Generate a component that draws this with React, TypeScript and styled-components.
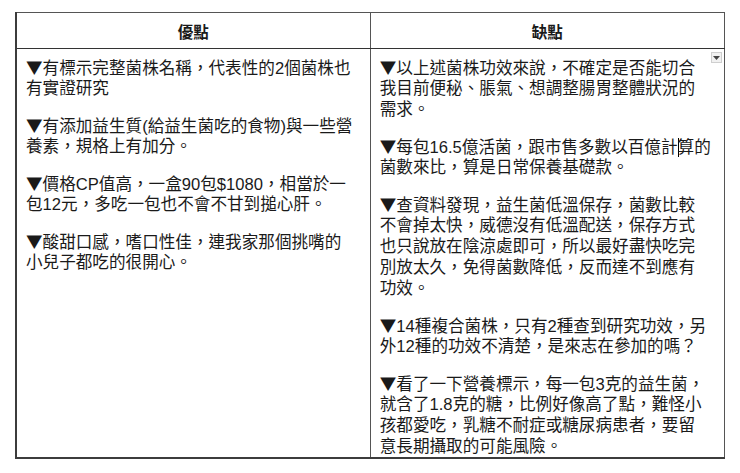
import React from "react";
import styled, { createGlobalStyle } from "styled-components";

const GlobalStyle = createGlobalStyle`
  body {
    margin: 0;
    background: #ffffff;
    color: #1a1a1a;
    font-family: "Liberation Sans", "Noto Sans CJK TC", sans-serif;
  }
`;

const Page = styled.div`
  padding: 12px 0 0 15px;
`;

const Table = styled.table`
  width: 710px;
  border-collapse: collapse;
  table-layout: fixed;
  border-top: 1px solid #6e6e6e;
  border-right: 1px solid #5a5a5a;
  border-left: 2px solid #3c3c3c;
  border-bottom: 2px solid #3c3c3c;
`;

const HeadCell = styled.th`
  height: 35px;
  padding: 0;
  border: 1px solid #555;
  border-bottom-color: #333;
  font-size: 15.5px;
  font-weight: bold;
  text-align: center;
  vertical-align: middle;
`;

const BodyCell = styled.td`
  position: relative;
  padding: 8px 2px 0 9px;
  border: 1px solid #555;
  vertical-align: top;
`;

const Para = styled.div`
  margin: 0 0 16px;
  font-size: 16.6px;

  &:last-child {
    margin-bottom: 0;
  }
`;

const Line = styled.div`
  height: 21px;
  line-height: 21px;
  white-space: nowrap;
`;

const Mark = styled.span`
  font-family: "Noto Sans CJK TC", sans-serif;
`;

const Caret = styled.span`
  display: inline-block;
  width: 1px;
  height: 19px;
  margin: 0 -1px 0 0;
  background: #000;
  vertical-align: -4px;
`;

const DropButton = styled.div`
  position: absolute;
  top: 3px;
  right: 2px;
  width: 9px;
  height: 9px;
  border: 1px solid #cfcfcf;
  background: #f1f1f1;
  display: flex;
  align-items: center;
  justify-content: center;
`;

const pros: React.ReactNode[][] = [
  ["有標示完整菌株名稱，代表性的2個菌株也", "有實證研究"],
  ["有添加益生質(給益生菌吃的食物)與一些營", "養素，規格上有加分。"],
  ["價格CP值高，一盒90包$1080，相當於一", "包12元，多吃一包也不會不甘到搥心肝。"],
  ["酸甜口感，嗜口性佳，連我家那個挑嘴的", "小兒子都吃的很開心。"],
];

const cons: React.ReactNode[][] = [
  ["以上述菌株功效來說，不確定是否能切合", "我目前便秘、脹氣、想調整腸胃整體狀況的", "需求。"],
  [
    <>
      每包16.5億活菌，跟市售多數以百億計
      <Caret />
      算的
    </>,
    "菌數來比，算是日常保養基礎款。",
  ],
  [
    "查資料發現，益生菌低溫保存，菌數比較",
    "不會掉太快，威德沒有低溫配送，保存方式",
    "也只說放在陰涼處即可，所以最好盡快吃完",
    "別放太久，免得菌數降低，反而達不到應有",
    "功效。",
  ],
  ["14種複合菌株，只有2種查到研究功效，另", "外12種的功效不清楚，是來志在參加的嗎？"],
  [
    "看了一下營養標示，每一包3克的益生菌，",
    "就含了1.8克的糖，比例好像高了點，難怪小",
    "孩都愛吃，乳糖不耐症或糖尿病患者，要留",
    "意長期攝取的可能風險。",
  ],
];

function Point({ lines }: { lines: React.ReactNode[] }) {
  return (
    <Para>
      {lines.map((line, i) => (
        <Line key={i}>
          {i === 0 && <Mark>▼</Mark>}
          {line}
        </Line>
      ))}
    </Para>
  );
}

function App() {
  return (
    <Page>
      <GlobalStyle />
      <Table>
        <thead>
          <tr>
            <HeadCell>優點</HeadCell>
            <HeadCell>缺點</HeadCell>
          </tr>
        </thead>
        <tbody>
          <tr>
            <BodyCell>
              {pros.map((lines, i) => (
                <Point key={i} lines={lines} />
              ))}
            </BodyCell>
            <BodyCell>
              <DropButton>
                <svg width="7" height="4" viewBox="0 0 7 4">
                  <path d="M0 0h7L3.5 4z" fill="#444" />
                </svg>
              </DropButton>
              {cons.map((lines, i) => (
                <Point key={i} lines={lines} />
              ))}
            </BodyCell>
          </tr>
        </tbody>
      </Table>
    </Page>
  );
}

export default App;
